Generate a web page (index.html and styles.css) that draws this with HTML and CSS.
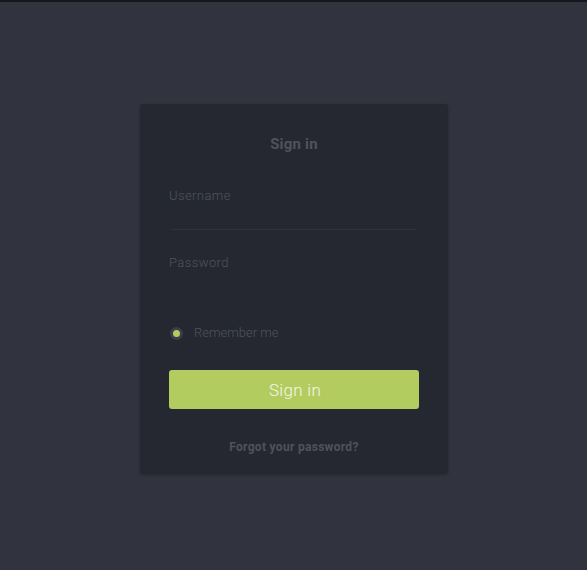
FILE: index.html
```html
<!DOCTYPE html>
<html>
<head>
<meta charset="utf-8">
<link rel="stylesheet" href="styles.css">
</head>
<body>
<div class="topline"></div>
<main class="page">
  <form class="card">
    <h1 class="title">Sign in</h1>
    <div class="field"><span class="label">Username</span></div>
    <div class="field field-last"><span class="label">Password</span></div>
    <label class="remember"><span class="radio"><span class="dot"></span></span><span class="remember-text">Remember me</span></label>
    <button type="button" class="btn">Sign in</button>
    <a class="forgot">Forgot your password?</a>
  </form>
</main>
</body>
</html>
```
FILE: styles.css
```css
html, body {
  margin: 0;
  padding: 0;
  height: 100%;
  background: #31333f;
  font-family: Roboto, "Liberation Sans", sans-serif;
}
.topline {
  height: 2px;
  background: #16171d;
}
.page {
  display: flex;
  justify-content: center;
  padding-top: 102px;
}
.card {
  box-sizing: border-box;
  width: 308px;
  margin-left: 1px;
  background: #252831;
  border-radius: 3px;
  box-shadow: 0 1px 3px rgba(0,0,0,0.25);
  padding: 31px 29px 20px 29px;
  display: flex;
  flex-direction: column;
}
.title {
  margin: 0;
  text-align: center;
  font-size: 15px;
  line-height: 18px;
  font-weight: 700;
  color: #4f525e;
  letter-spacing: 0.2px;
}
.field {
  margin-top: 11px;
  height: 66px;
  box-sizing: border-box;
  padding-top: 25px;
  margin-left: 2px;
  margin-right: 3px;
  border-bottom: 1px solid #30333d;
}
.field-last {
  margin-top: 0;
  padding-top: 26px;
  border-bottom-color: transparent;
}
.label {
  display: block;
  margin-left: -2px;
  font-size: 13px;
  line-height: 14px;
  font-weight: 300;
  color: #50535e;
  letter-spacing: 0.4px;
}
.remember {
  display: flex;
  align-items: center;
  margin-top: 30px;
  height: 14px;
}
.radio {
  width: 13px;
  height: 13px;
  border-radius: 50%;
  background: #3b3e4a;
  display: flex;
  align-items: center;
  justify-content: center;
  margin-left: 1px;
}
.dot {
  width: 7px;
  height: 7px;
  border-radius: 50%;
  background: #b3cc5f;
}
.remember-text {
  margin-left: 11px;
  font-size: 13px;
  line-height: 14px;
  font-weight: 300;
  color: #50535e;
  letter-spacing: 0;
}
.btn {
  margin-top: 30px;
  height: 39px;
  border: none;
  border-radius: 3px;
  background: #b3cc60;
  color: #f3f6e6;
  font-family: Roboto, "Liberation Sans", sans-serif;
  font-size: 17px;
  font-weight: 300;
  letter-spacing: 0.3px;
  padding: 0 0 0 2px;
}
.forgot {
  margin-top: 31px;
  text-align: center;
  font-size: 12px;
  line-height: 14px;
  font-weight: 700;
  color: #4f525d;
  letter-spacing: 0.3px;
}
```
